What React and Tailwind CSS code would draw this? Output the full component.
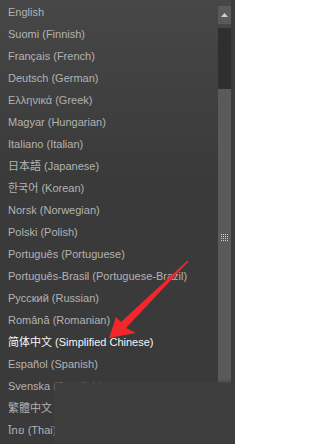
import React from 'react';

const languages = [
  'English',
  'Suomi (Finnish)',
  'Français (French)',
  'Deutsch (German)',
  'Ελληνικά (Greek)',
  'Magyar (Hungarian)',
  'Italiano (Italian)',
  '日本語 (Japanese)',
  '한국어 (Korean)',
  'Norsk (Norwegian)',
  'Polski (Polish)',
  'Português (Portuguese)',
  'Português-Brasil (Portuguese-Brazil)',
  'Русский (Russian)',
  'Română (Romanian)',
  '简体中文 (Simplified Chinese)',
  'Español (Spanish)',
  'Svenska (Swedish)',
  '繁體中文 (Traditional Chinese)',
  'ไทย (Thai)',
];

const selected = '简体中文 (Simplified Chinese)';

function Scrollbar() {
  return (
    <div className="w-[13px] shrink-0 flex flex-col pt-[6px]">
      {/* up button */}
      <div className="h-[18px] bg-[#5a5a5a] flex items-center justify-center">
        <svg width="7" height="4" viewBox="0 0 7 4">
          <polygon points="3.5,0 7,4 0,4" fill="#cfcfcf" />
        </svg>
      </div>
      {/* track above thumb */}
      <div className="h-[61px] mt-[4px] bg-[#2f2f2f]" />
      {/* thumb */}
      <div className="flex-1 bg-[#5a5a5a] flex flex-col items-center">
        <div className="mt-[145px] grid grid-cols-4 gap-[1px]">
          {Array.from({ length: 16 }).map((_, i) => (
            <div key={i} className="w-[1px] h-[1px] bg-[#cfcfcf]" />
          ))}
        </div>
      </div>
    </div>
  );
}

function Arrow() {
  return (
    <svg
      className="absolute left-0 top-0 pointer-events-none"
      width="235"
      height="444"
      viewBox="0 0 235 444"
    >
      <polygon
        points="109,338 116,317 121,322 187.5,260.5 188.5,261.5 126,328 136,333"
        fill="#f2272b"
      />
    </svg>
  );
}

export default function App() {
  return (
    <div
      className="relative w-[235px] h-[444px] overflow-hidden bg-linear-to-b from-[#474747] to-[#3a3a3a] to-40%"
      style={{ fontFamily: '"Liberation Sans", Arial, "Noto Sans CJK SC", "Noto Sans Thai", sans-serif' }}
    >
      <div className="flex h-full">
        {/* list */}
        <div className="flex-1 pt-[1px] flex flex-col">
          {languages.map((lang) => (
            <div
              key={lang}
              className={`h-[22px] leading-[22px] pl-2 text-[11px] whitespace-nowrap ${
                lang === selected ? 'text-[#f6f6f6]' : 'text-[#b3b3b3]'
              }`}
            >
              {lang}
            </div>
          ))}
        </div>

        <Scrollbar />
        <div className="w-[4px] shrink-0 bg-[#3c3c3c]" />
      </div>

      <Arrow />

      {/* blurred watermark patch */}
      <div className="absolute left-[55px] top-[383px] right-0 bottom-0 bg-[#3e3e3e] shadow-[0_0_3px_1px_#3e3e3e]" />
    </div>
  );
}
